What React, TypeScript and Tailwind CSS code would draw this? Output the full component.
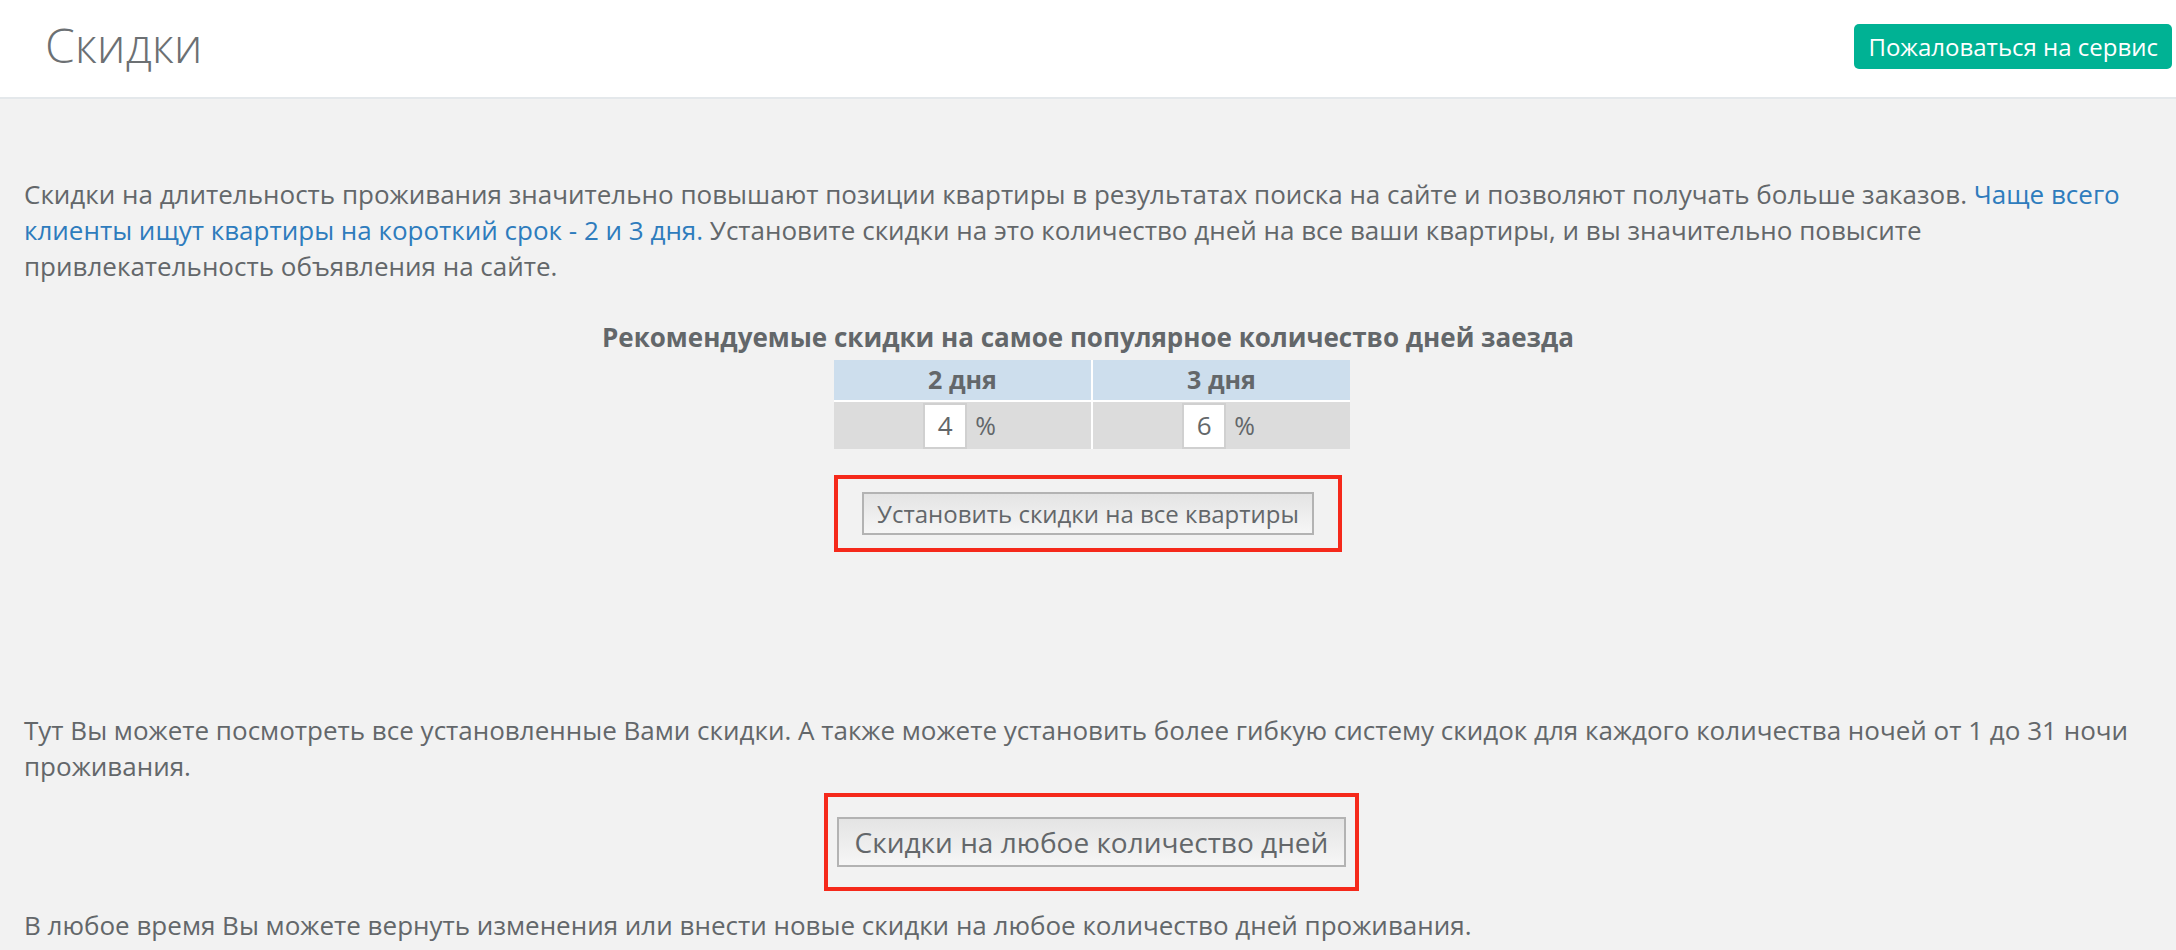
import React from "react";

const font = { fontFamily: '"Open Sans", "Noto Sans", sans-serif' };

function GreyButton({ label, size }: { label: string; size: "md" | "lg" }) {
  return (
    <button
      className={`border-2 border-[#b3b3b3] bg-gradient-to-b from-[#e4e4e4] to-[#f6f6f6] text-[#63676a] leading-none ${
        size === "lg" ? "h-[50px] px-[16px] text-[28px]" : "h-[43px] px-[13px] text-[24px]"
      }`}
    >
      {label}
    </button>
  );
}

function DayCell({ value }: { value: number }) {
  return (
    <div className="flex h-[47px] items-center justify-center bg-[#dcdcdc]">
      <div className="ml-[-6px] flex h-[46px] w-[44px] items-center justify-center border-2 border-[#d0d0d0] bg-white text-[26px] text-[#63676a]">
        {value}
      </div>
      <span className="ml-[8px] text-[25px] text-[#63676a]">%</span>
    </div>
  );
}

export default function App() {
  return (
    <div className="min-h-[950px] w-full bg-[#f2f2f2] text-[#63676a]" style={font}>
      <header className="flex h-[99px] items-start justify-between border-b-2 border-[#e4e8eb] bg-white">
        <h1 className="ml-[45px] mt-[7px] text-[48px] font-light leading-[76px] text-[#6c7073]">
          Скидки
        </h1>
        <button className="mr-[4px] mt-[24px] h-[45px] rounded-[5px] bg-[#00b294] px-[14px] text-[24px] leading-none text-white">
          Пожаловаться на сервис
        </button>
      </header>

      <main className="px-[24px]">
        <p className="mt-[77px] text-[26px] leading-[36px]">
          Скидки на длительность проживания значительно повышают позиции квартиры в результатах
          поиска на сайте и позволяют получать больше заказов.{" "}
          <a className="text-[#2e7cbd]">
            Чаще всего клиенты ищут квартиры на короткий срок - 2 и 3 дня.
          </a>{" "}
          Установите скидки на это количество дней на все ваши квартиры, и вы значительно
          повысите привлекательность объявления на сайте.
        </p>

        <section className="mt-[35px] flex flex-col items-center">
          <h2 className="text-[26px] font-bold leading-[36px]">
            Рекомендуемые скидки на самое популярное количество дней заезда
          </h2>
          <div className="ml-[8px] mt-[5px] grid w-[516px] grid-cols-2 gap-[2px] bg-white">
            <div className="flex h-[40px] items-center justify-center bg-[#cddeed] text-[25px] font-bold">
              2 дня
            </div>
            <div className="flex h-[40px] items-center justify-center bg-[#cddeed] text-[25px] font-bold">
              3 дня
            </div>
            <DayCell value={4} />
            <DayCell value={6} />
          </div>

          <div className="mt-[26px] flex h-[77px] w-[508px] items-center justify-center border-4 border-[#f5291b]">
            <GreyButton label="Установить скидки на все квартиры" size="md" />
          </div>
        </section>

        <p className="mt-[160px] text-[26px] leading-[36px]">
          Тут Вы можете посмотреть все установленные Вами скидки. А также можете установить более
          гибкую систему скидок для каждого количества ночей от 1 до 31 ночи проживания.
        </p>

        <div className="mt-[9px] flex justify-center">
          <div className="ml-[7px] flex h-[98px] w-[535px] items-center justify-center border-4 border-[#f5291b]">
            <GreyButton label="Скидки на любое количество дней" size="lg" />
          </div>
        </div>

        <p className="mt-[16px] text-[26px] leading-[36px]">
          В любое время Вы можете вернуть изменения или внести новые скидки на любое количество
          дней проживания.
        </p>
      </main>
    </div>
  );
}
